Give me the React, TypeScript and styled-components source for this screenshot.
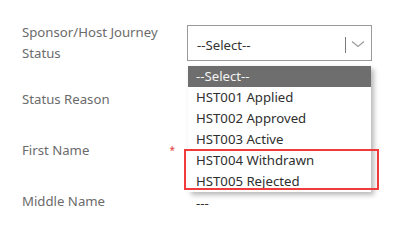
import React from "react";
import styled, { createGlobalStyle } from "styled-components";

const Global = createGlobalStyle`
  html, body { margin: 0; padding: 0; background: #ffffff; }
  body { font-family: "Noto Sans", "Open Sans", sans-serif; }
`;

const Form = styled.div`
  display: grid;
  grid-template-columns: 165px 185px;
  grid-template-rows: 67px 51px 51px 51px;
  padding: 22px 0 0 22px;
  width: 383px;
  box-sizing: border-box;
`;

const Label = styled.div`
  position: relative;
  font-size: 13.2px;
  line-height: 21px;
  color: #6b6b6b;
`;

const Required = styled.span`
  position: absolute;
  right: 12px;
  top: 0px;
  color: #e0403a;
  font-size: 10px;
  line-height: 21px;
`;

const FieldCell = styled.div`
  position: relative;
`;

const SelectBox = styled.div`
  margin-top: 3px;
  height: 36px;
  box-sizing: border-box;
  border: 1px solid #9a9a9a;
  display: flex;
  align-items: center;
  padding-left: 9px;
  padding-right: 6px;
  font-size: 13.2px;
  color: #333333;
`;

const SelectText = styled.span`
  flex: 1;
  padding-top: 4px;
`;

const Divider = styled.span`
  width: 1px;
  height: 16px;
  background: #7a7a7a;
  margin-right: 5px;
  margin-top: 4px;
`;

const List = styled.div`
  position: absolute;
  left: 1px;
  top: 44px;
  width: 183px;
  background: #ffffff;
  box-shadow: 3px 3px 5px rgba(0, 0, 0, 0.28);
  z-index: 2;
`;

const Option = styled.div<{ $selected?: boolean }>`
  height: 21px;
  line-height: 21px;
  padding-left: 8px;
  font-size: 13.2px;
  color: ${(p) => (p.$selected ? "#f4f4f4" : "#2f2f2f")};
  background: ${(p) => (p.$selected ? "#6e6e6e" : "transparent")};
`;

const Highlight = styled.div`
  position: absolute;
  left: -3px;
  top: 127px;
  width: 195px;
  height: 41px;
  box-sizing: border-box;
  border: 2px solid #f03a3c;
  z-index: 3;
`;

const Value = styled.div`
  font-size: 13.2px;
  line-height: 21px;
  color: #333333;
  padding-left: 9px;
  padding-top: 2px;
`;

const Chevron = () => (
  <svg width="14" height="8" viewBox="0 0 14 8" style={{ marginTop: 2 }}>
    <polyline points="1,1.5 7,6.5 13,1.5" fill="none" stroke="#9a9a9a" strokeWidth="1.1" />
  </svg>
);

const options = [
  "--Select--",
  "HST001 Applied",
  "HST002 Approved",
  "HST003 Active",
  "HST004 Withdrawn",
  "HST005 Rejected",
];

export default function App() {
  return (
    <>
      <Global />
      <Form>
        <Label>
          Sponsor/Host Journey
          <br />
          Status
        </Label>
        <FieldCell>
          <SelectBox>
            <SelectText>--Select--</SelectText>
            <Divider />
            <Chevron />
          </SelectBox>
          <List>
            {options.map((o, i) => (
              <Option key={o} $selected={i === 0}>
                {o}
              </Option>
            ))}
          </List>
          <Highlight />
        </FieldCell>
        <Label>Status Reason</Label>
        <FieldCell />
        <Label>
          First Name
          <Required>*</Required>
        </Label>
        <FieldCell />
        <Label>Middle Name</Label>
        <FieldCell>
          <Value>---</Value>
        </FieldCell>
      </Form>
    </>
  );
}
